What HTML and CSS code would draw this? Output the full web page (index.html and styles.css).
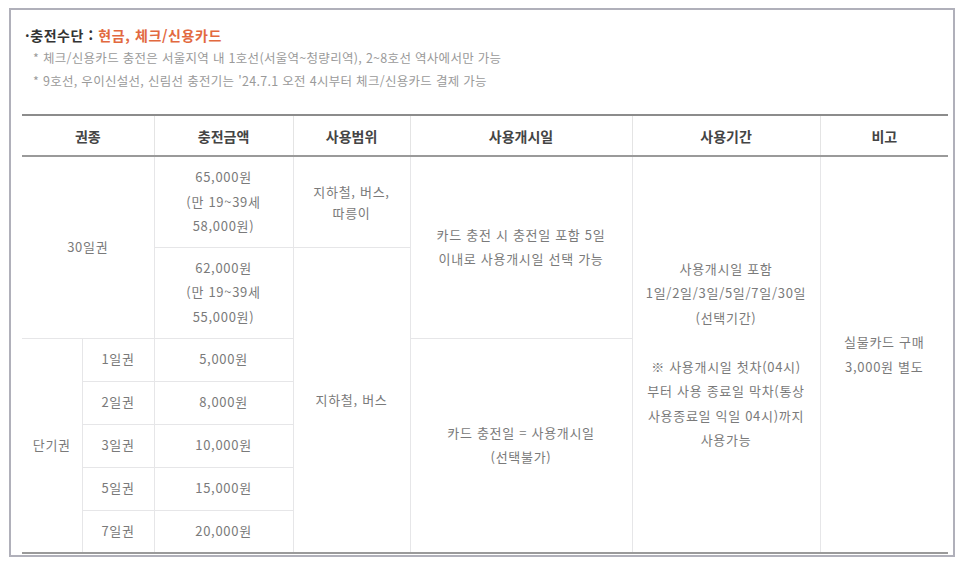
FILE: index.html
```html
<!DOCTYPE html>
<html lang="ko">
<head>
<meta charset="utf-8">
<title>기후동행카드 충전 안내</title>
<link rel="stylesheet" href="styles.css">
</head>
<body>
<div class="frame">
  <div class="intro">
    <p class="title">·충전수단 : <span class="accent">현금, 체크/신용카드</span></p>
    <p class="note">* 체크/신용카드 충전은 서울지역 내 1호선(서울역~청량리역), 2~8호선 역사에서만 가능</p>
    <p class="note">* 9호선, 우이신설선, 신림선 충전기는 '24.7.1 오전 4시부터 체크/신용카드 결제 가능</p>
  </div>
  <table class="fare">
    <colgroup>
      <col class="c1"><col class="c2"><col class="c3"><col class="c4"><col class="c5"><col class="c6"><col class="c7">
    </colgroup>
    <thead>
      <tr>
        <th colspan="2" class="edge-l">권종</th>
        <th>충전금액</th>
        <th>사용범위</th>
        <th>사용개시일</th>
        <th>사용기간</th>
        <th class="edge-r">비고</th>
      </tr>
    </thead>
    <tbody>
      <tr class="tall">
        <td colspan="2" rowspan="2" class="edge-l">30일권</td>
        <td>65,000원<br>(만 19~39세<br>58,000원)</td>
        <td class="tight">지하철, 버스,<br>따릉이</td>
        <td rowspan="2">카드 충전 시 충전일 포함 5일<br>이내로 사용개시일 선택 가능</td>
        <td rowspan="7">사용개시일 포함<br>1일/2일/3일/5일/7일/30일<br>(선택기간)<br><br>※ 사용개시일 첫차(04시)<br>부터 사용 종료일 막차(통상<br>사용종료일 익일 04시)까지<br>사용가능</td>
        <td rowspan="7" class="edge-r">실물카드 구매<br>3,000원 별도</td>
      </tr>
      <tr class="tall">
        <td>62,000원<br>(만 19~39세<br>55,000원)</td>
        <td rowspan="6">지하철, 버스</td>
      </tr>
      <tr class="short">
        <td rowspan="5" class="edge-l">단기권</td>
        <td>1일권</td>
        <td>5,000원</td>
        <td rowspan="5">카드 충전일 = 사용개시일<br>(선택불가)</td>
      </tr>
      <tr class="short"><td>2일권</td><td>8,000원</td></tr>
      <tr class="short"><td>3일권</td><td>10,000원</td></tr>
      <tr class="short"><td>5일권</td><td>15,000원</td></tr>
      <tr class="short"><td>7일권</td><td>20,000원</td></tr>
    </tbody>
  </table>
</div>
</body>
</html>
```
FILE: styles.css
```css
html, body {
  margin: 0;
  padding: 0;
  background: #ffffff;
}
body {
  font-family: "Noto Sans CJK KR", "Noto Sans", sans-serif;
  color: #777;
}
.frame {
  box-sizing: border-box;
  width: 946px;
  height: 549px;
  margin: 8px 0 0 9px;
  border: 2px solid #b0b0ba;
  padding: 14px 5px 0 11px;
}
.intro p {
  margin: 0;
}
.title {
  font-size: 14px;
  font-weight: bold;
  line-height: 22px;
  letter-spacing: 0.6px;
  color: #333;
  padding-left: 3px;
}
.accent {
  color: #e2693f;
}
.note {
  font-size: 12.5px;
  line-height: 23px;
  letter-spacing: 0.3px;
  color: #9a9a9a;
  padding-left: 11px;
}
.fare {
  margin-top: 22px;
  width: 926px;
  table-layout: fixed;
  border-collapse: collapse;
}
.c1 { width: 60px; }
.c2 { width: 72px; }
.c3 { width: 139px; }
.c4 { width: 117px; }
.c5 { width: 222px; }
.c6 { width: 188px; }
.c7 { width: 128px; }
.fare thead {
  border-top: 2px solid #8c8c8c;
  border-bottom: 2px solid #9a9a9a;
}
.fare tbody {
  border-bottom: 2px solid #9a9a9a;
}
.fare th {
  height: 39px;
  padding: 0;
  font-size: 14px;
  font-weight: bold;
  color: #444;
  text-align: center;
  border-left: 1px solid #e4e4e4;
  border-right: 1px solid #e4e4e4;
}
.fare td {
  padding: 0;
  font-size: 13px;
  letter-spacing: 0.7px;
  line-height: 24.5px;
  text-align: center;
  vertical-align: middle;
  border: 1px solid #e6e6e8;
  color: #7a7a7a;
}
.fare .edge-l { border-left: none; }
.fare .edge-r { border-right: none; }
.fare td.tight { line-height: 21px; }
.tall { height: 91px; }
.short { height: 43px; }
```
